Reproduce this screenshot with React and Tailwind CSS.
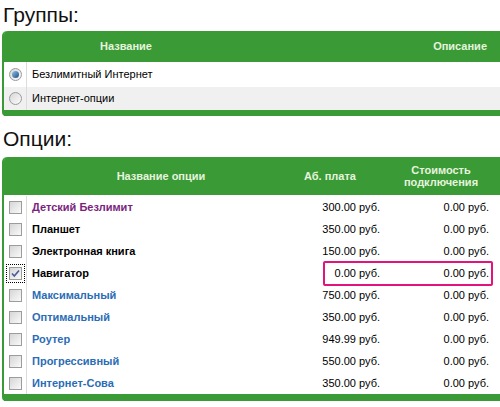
import React from "react";

const GREEN = "bg-[#3a9a36]";

const options = [
  { name: "Детский Безлимит", color: "text-[#7b1f7d]", fee: "300.00", connect: "0.00" },
  { name: "Планшет", color: "text-black", fee: "350.00", connect: "0.00" },
  { name: "Электронная книга", color: "text-black", fee: "150.00", connect: "0.00" },
  { name: "Навигатор", color: "text-black", fee: "0.00", connect: "0.00", checked: true },
  { name: "Максимальный", color: "text-[#2a6cb6]", fee: "750.00", connect: "0.00" },
  { name: "Оптимальный", color: "text-[#2a6cb6]", fee: "350.00", connect: "0.00" },
  { name: "Роутер", color: "text-[#2a6cb6]", fee: "949.99", connect: "0.00" },
  { name: "Прогрессивный", color: "text-[#2a6cb6]", fee: "550.00", connect: "0.00" },
  { name: "Интернет-Сова", color: "text-[#2a6cb6]", fee: "350.00", connect: "0.00" },
];

function Radio({ on }) {
  return (
    <span className="relative block w-[13px] h-[13px] rounded-full border border-[#9a9a9a] bg-gradient-to-br from-[#d8d8d8] to-[#fbfbfb]">
      {on && (
        <span className="absolute left-[2px] top-[2px] w-[7px] h-[7px] rounded-full bg-gradient-to-br from-[#8fc3e8] to-[#1d4f86]" />
      )}
    </span>
  );
}

function Checkbox({ checked }) {
  const box = (
    <span className="relative block w-[13px] h-[13px] border border-[#9c9c9c] bg-gradient-to-br from-[#d6d6d6] to-[#fafafa]">
      {checked && (
        <svg className="absolute left-0 top-0" width="11" height="11" viewBox="0 0 11 11">
          <path d="M2 5.5 L4.3 8 L9 2.5" fill="none" stroke="#4b5a94" strokeWidth="1.6" />
        </svg>
      )}
    </span>
  );
  if (checked) {
    return <span className="block p-[2px] border border-dotted border-black">{box}</span>;
  }
  return box;
}

export default function App() {
  return (
    <div className="w-[500px] h-[407px] overflow-hidden bg-white font-['Liberation_Sans',Arial,sans-serif] text-[11px] text-black">
      <div className="h-[31px] pl-[3px] pt-[3px] text-[21px] leading-[24px] text-[#111]">Группы:</div>

      <div className="ml-[2px] w-[520px] border-l-2 border-[#3a9a36] rounded-tl-[5px] rounded-bl-[4px]">
        <div className={`${GREEN} h-[31px] rounded-tl-[4px] flex items-center font-bold text-[#e6f4de]`}>
          <div className="w-[23px]" />
          <div className="w-[198px] text-center">Название</div>
          <div className="w-[262px] text-right">Описание</div>
        </div>
        <div className="h-[25px] flex items-center bg-white">
          <div className="w-[23px] h-full flex items-center justify-center border-r border-[#dcdcdc]">
            <Radio on />
          </div>
          <div className="pl-[5px]">Безлимитный Интернет</div>
        </div>
        <div className="h-[23px] flex items-center bg-[#f0f0f0]">
          <div className="w-[23px] h-full flex items-center justify-center border-r border-[#dcdcdc]">
            <Radio />
          </div>
          <div className="pl-[5px]">Интернет-опции</div>
        </div>
        <div className={`${GREEN} h-[6px]`} />
      </div>

      <div className="h-[41px] pl-[3px] pt-[11px] text-[21px] leading-[24px] text-[#111]">Опции:</div>

      <div className="relative ml-[2px] w-[520px] border-l-2 border-[#3a9a36] rounded-tl-[5px] rounded-bl-[4px]">
        <div className={`${GREEN} h-[38px] rounded-tl-[4px] flex items-center font-bold text-[#e6f4de] leading-[12px]`}>
          <div className="w-[23px]" />
          <div className="w-[268px] text-center">Название опции</div>
          <div className="w-[70px] text-center">Аб. плата</div>
          <div className="w-[152px] text-center">Стоимость<br />подключения</div>
        </div>
        <div className="h-px bg-white" />
        {options.map((o) => (
          <div key={o.name} className="h-[22px] flex items-center bg-white">
            <div className="w-[23px] h-full flex items-center justify-center border-r border-[#dcdcdc]">
              <Checkbox checked={o.checked} />
            </div>
            <div className={`w-[253px] pl-[5px] font-bold ${o.color}`}>{o.name}</div>
            <div className="w-[100px] text-right">{o.fee} руб.</div>
            <div className="w-[109px] text-right">{o.connect} руб.</div>
          </div>
        ))}
        <div className={`${GREEN} h-[7px]`} />
        <div className="absolute left-[319px] top-[104px] w-[170px] h-[25px] border-2 border-[#e2137c] rounded-[2px]" />
      </div>
    </div>
  );
}
